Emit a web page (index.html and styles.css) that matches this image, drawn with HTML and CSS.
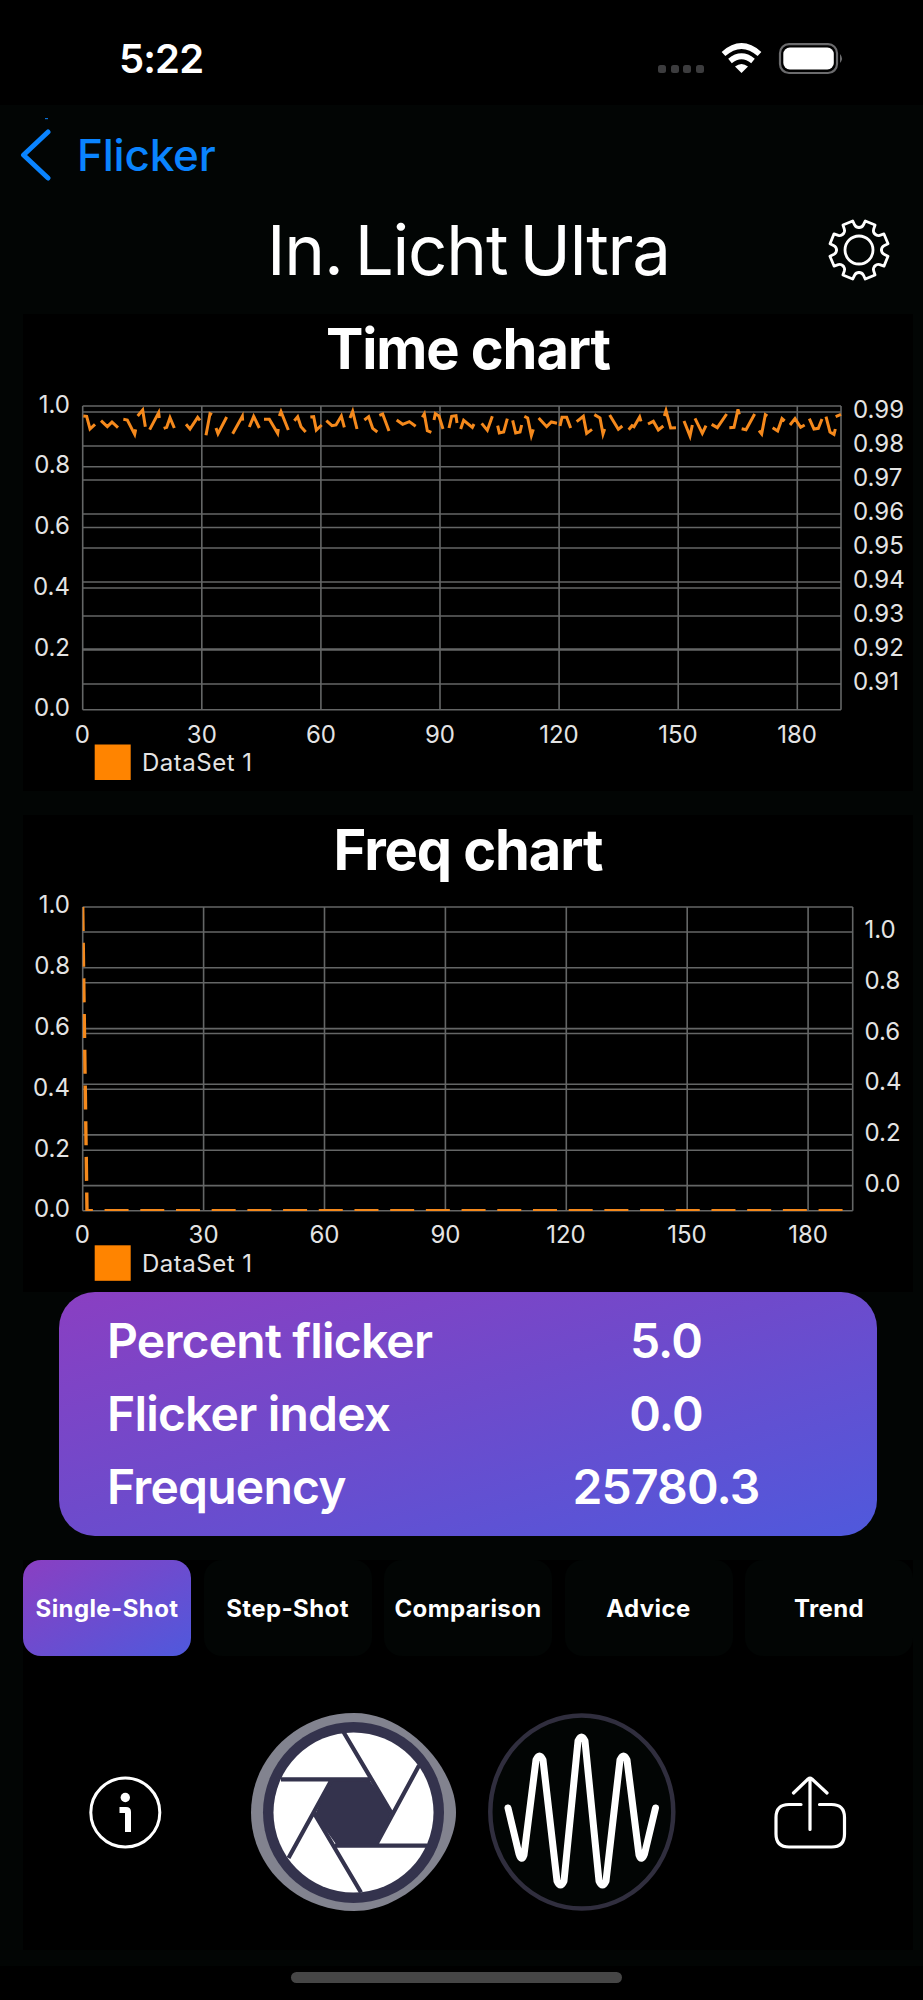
FILE: index.html
```html
<!DOCTYPE html>
<html lang="en">
<head>
    <meta charset="UTF-8">
    <title>Flicker</title>
    <link rel="stylesheet" href="styles.css">
</head>
<body>
    <div class="status-bar">
        <span class="time">5:22</span>
        <svg class="status-icons" width="188" height="34" viewBox="0 0 188 34">
            <g fill="#3c3c3e">
                <rect x="0" y="22" width="8" height="8" rx="2.500"/>
                <rect x="13" y="22" width="8" height="8" rx="2.500"/>
                <rect x="25" y="22" width="8" height="8" rx="2.500"/>
                <rect x="38" y="22" width="8" height="8" rx="2.500"/>
            </g>
            <g fill="none" stroke="#fff" stroke-width="5.600">
                <path d="M65.500 11 Q83.500 -5 101.500 11"/>
                <path d="M72 18 Q83.500 8.500 95 18"/>
            </g>
            <path d="M77 23.500 Q83.500 18.500 90 23.500 L83.500 30 Z" fill="#fff"/>
            <rect x="122" y="1.200" width="57" height="28.800" rx="9" fill="none" stroke="#6b6b6d" stroke-width="2.200"/>
            <rect x="125.300" y="4.500" width="50.500" height="22" rx="6.500" fill="#fff"/>
            <path d="M182 11 Q186 15.500 182 20 Z" fill="#6b6b6d"/>
        </svg>
    </div>

    <div class="nav">
        <svg width="32" height="80" viewBox="0 -13 32 80">
            <path d="M29 4 L4.500 27 L29 50" fill="none" stroke="#0a84ff" stroke-width="5" stroke-linecap="round" stroke-linejoin="round"/>
            <rect x="26" y="-10" width="3" height="1.200" fill="#0a6ed1"/>
        </svg>
        <span class="back">Flicker</span>
    </div>

    <div class="title-row">
        <h1>In. Licht Ultra</h1>
        <svg class="gear" width="62" height="62" viewBox="-31 -31 62 62">
            <g fill="none" stroke="#fff" stroke-width="2.800" stroke-linejoin="round" stroke-linecap="round">
                <circle r="14"/>
                <path id="tooth" d="M0 -22.500Q3 -22.500 4.300 -25L6.300 -29L16.100 -25L14.600 -20.700Q13.800 -18 15.900 -15.900"/>
                <use href="#tooth" transform="rotate(45)"/>
                <use href="#tooth" transform="rotate(90)"/>
                <use href="#tooth" transform="rotate(135)"/>
                <use href="#tooth" transform="rotate(180)"/>
                <use href="#tooth" transform="rotate(225)"/>
                <use href="#tooth" transform="rotate(270)"/>
                <use href="#tooth" transform="rotate(315)"/>
            </g>
        </svg>
    </div>

    <div class="panel">
        <h2>Time chart</h2>
        <svg class="chart" width="890" height="407" viewBox="23 384 890 407">
            <path class="grid" d="M82.700 406H841M82.700 466.700H841M82.700 527.500H841M82.700 588H841M82.700 649H841M82.700 709.700H841
                M82.700 412H841M82.700 446H841M82.700 480H841M82.700 514H841M82.700 548H841M82.700 582H841M82.700 616H841M82.700 650H841M82.700 684H841
                M82.700 406V709.700M201.800 406V709.700M320.900 406V709.700M440 406V709.700M559.100 406V709.700M678.200 406V709.700M797.300 406V709.700M841 406V709.700"/>
            <g transform="translate(20 310) scale(.33333)">
                <path class="wave" d="M190 318L200 319L210 357L225 343 M243 332L262 350L276 336L294 353 M310 328L322 330L344 373L347 358
                    M353 318L368 300L376 350 M389 359L416 308L418 324 M431 355L440 352L450 323L463 354 M498 343L510 357L533 322L540 331
                    M558 376L570 311L576 314 M588 354L594 371L620 321 M638 371L667 319L668 332 M688 351L701 319L718 354
                    M732 328L748 328L773 370L775 357 M778 318L783 305L805 360 M823 332L833 320L843 350L857 366 M871 321L881 320L889 360L905 345
                    M919 332L936 347L948 345L964 318L973 352 M990 324L998 304L1011 357 M1033 330L1046 320L1058 355L1072 366
                    M1078 316L1088 312L1107 363 M1130 330L1148 343L1168 335L1187 349 M1207 322L1213 312L1222 362L1234 367
                    M1242 330L1246 311L1257 318L1269 357 M1287 354L1295 319L1308 317L1311 339 M1322 357L1331 331L1357 352L1362 342
                    M1385 340L1402 361L1417 319 M1433 347L1438 369L1451 366L1462 326 M1478 331L1487 369L1500 366L1505 345
                    M1513 319L1523 324L1534 377L1540 358 M1556 324L1580 350L1594 336L1611 340 M1620 348L1626 322L1640 322L1652 354
                    M1670 335L1690 319L1700 370L1716 358 M1723 314L1740 324L1749 372L1754 357 M1769 315L1795 358L1807 348
                    M1826 359L1836 347L1842 350L1859 321L1863 334 M1884 342L1900 334L1915 360L1930 348 M1933 318L1938 302L1952 354L1968 353
                    M1992 333L2010 378L2017 345 M2025 325L2047 370L2058 347 M2075 343L2092 353L2120 312 M2128 353L2142 352L2154 298L2158 313
                    M2165 356L2178 359L2204 312 M2217 362L2225 372L2236 314L2242 318 M2258 353L2273 363L2286 326L2294 333
                    M2310 345L2325 326L2342 352L2354 345 M2368 326L2382 357L2395 355L2406 327 M2418 320L2430 366L2442 373L2446 357 M2447 320L2463 313"/>
            </g>
            <g class="axis left">
                <text x="70" y="412.500">1.0</text>
                <text x="70" y="473">0.8</text>
                <text x="70" y="534">0.6</text>
                <text x="70" y="594.500">0.4</text>
                <text x="70" y="655.500">0.2</text>
                <text x="70" y="716">0.0</text>
            </g>
            <g class="axis">
                <text x="853" y="418">0.99</text>
                <text x="853" y="452">0.98</text>
                <text x="853" y="486">0.97</text>
                <text x="853" y="520">0.96</text>
                <text x="853" y="554">0.95</text>
                <text x="853" y="588">0.94</text>
                <text x="853" y="622">0.93</text>
                <text x="853" y="656">0.92</text>
                <text x="853" y="690">0.91</text>
            </g>
            <g class="axis ticks">
                <text x="82.300" y="742.500">0</text>
                <text x="201.800" y="742.500">30</text>
                <text x="320.900" y="742.500">60</text>
                <text x="440" y="742.500">90</text>
                <text x="559" y="742.500">120</text>
                <text x="678" y="742.500">150</text>
                <text x="797" y="742.500">180</text>
            </g>
            <rect class="legend" x="94.700" y="744.500" width="36" height="35.500"/>
            <text class="axis name" x="142" y="771">DataSet 1</text>
        </svg>
    </div>

    <div class="panel freq">
        <h2>Freq chart</h2>
        <svg class="chart" width="890" height="407" viewBox="23 885 890 407">
            <path class="grid" d="M82.700 907H852.700M82.700 967.700H852.700M82.700 1028.600H852.700M82.700 1089.300H852.700M82.700 1150.300H852.700M82.700 1210.700H852.700
                M82.700 932H852.700M82.700 982.800H852.700M82.700 1033.500H852.700M82.700 1084.200H852.700M82.700 1134.900H852.700M82.700 1185.600H852.700
                M82.700 907V1210.700M203.600 907V1210.700M324.500 907V1210.700M445.400 907V1210.700M566.300 907V1210.700M687.200 907V1210.700M808.100 907V1210.700M852.700 907V1210.700"/>
            <clipPath id="plot"><rect x="82.700" y="906" width="770" height="305"/></clipPath>
            <path class="spectrum" clip-path="url(#plot)" d="M82.700 907L87 1210.700H852.700"/>
            <g class="axis left">
                <text x="70" y="913.300">1.0</text>
                <text x="70" y="974">0.8</text>
                <text x="70" y="1035">0.6</text>
                <text x="70" y="1095.500">0.4</text>
                <text x="70" y="1156.500">0.2</text>
                <text x="70" y="1217">0.0</text>
            </g>
            <g class="axis">
                <text x="864.500" y="938">1.0</text>
                <text x="864.500" y="989">0.8</text>
                <text x="864.500" y="1039.700">0.6</text>
                <text x="864.500" y="1090.300">0.4</text>
                <text x="864.500" y="1141">0.2</text>
                <text x="864.500" y="1191.700">0.0</text>
            </g>
            <g class="axis ticks">
                <text x="82.300" y="1243.300">0</text>
                <text x="203.600" y="1243.300">30</text>
                <text x="324.500" y="1243.300">60</text>
                <text x="445.400" y="1243.300">90</text>
                <text x="566" y="1243.300">120</text>
                <text x="687" y="1243.300">150</text>
                <text x="808" y="1243.300">180</text>
            </g>
            <rect class="legend" x="94.700" y="1245.300" width="36" height="35.500"/>
            <text class="axis name" x="142" y="1272">DataSet 1</text>
        </svg>
    </div>

    <div class="results">
        <span>Percent flicker</span><span class="value">5.0</span>
        <span>Flicker index</span><span class="value">0.0</span>
        <span>Frequency</span><span class="value">25780.3</span>
    </div>

    <div class="bottom">
        <div class="tabs">
            <div class="tab active">Single-Shot</div>
            <div class="tab">Step-Shot</div>
            <div class="tab">Comparison</div>
            <div class="tab">Advice</div>
            <div class="tab">Trend</div>
        </div>
        <svg class="actions" width="890" height="294" viewBox="23 1656 890 294">
            <!-- info -->
            <circle cx="125.300" cy="1812.500" r="34.500" fill="none" stroke="#fff" stroke-width="3"/>
            <circle cx="125.300" cy="1797.500" r="4.700" fill="#fff"/>
            <path d="M119.500 1807H126Q131 1807 131 1812V1832H125V1813H119.500Z" fill="#fff"/>

            <!-- shutter -->
            <path d="M354 1713C407 1713 456 1768 456 1812.500C456 1857 407 1911 354 1911C297 1911 251 1867 251 1812.500C251 1758 297 1713 354 1713Z" fill="#82838f"/>
            <circle cx="353.500" cy="1812.500" r="90.500" fill="#34334d"/>
            <circle cx="353.500" cy="1812.500" r="80" fill="#fff"/>
            <path d="M330.500 1778H368L392 1812L376.500 1844.500L338 1847L315 1815Z" fill="#34334d"/>
            <path d="M343.500 1732L391.500 1813M281 1779.300H370M419 1765.500L376.500 1844M427 1845.700H335M361 1892.500L314 1813M288.500 1858L331.500 1780" fill="none" stroke="#34334d" stroke-width="4.200"/>

            <!-- waveform -->
            <ellipse cx="581.800" cy="1812" rx="91.500" ry="96.500" fill="#020504" stroke="#302e3e" stroke-width="4.500"/>
            <path d="M508 1808L519 1854Q521.500 1862 524 1855L536 1760Q539.500 1752 543 1760L557 1881Q560.500 1889 564 1881L578 1741Q581.500 1733 585 1741L599 1881Q602.500 1889 606 1881L620 1760Q623.500 1752 627 1760L639 1855Q641.500 1862 644.500 1854L655.500 1808" fill="none" stroke="#fff" stroke-width="7" stroke-linecap="round" stroke-linejoin="round"/>

            <!-- share -->
            <path d="M801 1804.500H789Q776 1804.500 776 1817.500V1834Q776 1847 789 1847H831.500Q844.500 1847 844.500 1834V1817.500Q844.500 1804.500 831.500 1804.500H819.500M810 1829.500V1779M793.500 1793L808 1779Q810 1777.500 812 1779L827 1793" fill="none" stroke="#fff" stroke-width="3.200" stroke-linecap="round"/>
        </svg>
    </div>
    <div class="home"><div class="home-bar"></div></div>
</body>
</html>
```

FILE: styles.css
```css
* {
    box-sizing: border-box;
}

body {
    margin: 0;
    width: 923px;
    height: 2000px;
    background-color: #020504;
    color: #fff;
    font-family: Inter, "Liberation Sans", sans-serif;
    overflow: hidden;
}

.status-bar {
    height: 105px;
    background-color: #000;
    display: flex;
    justify-content: space-between;
    padding: 34px 77px 0 119px;
}

.time {
    font-size: 40px;
    line-height: 49px;
    font-weight: 600;
    letter-spacing: -0.9px;
}

.status-icons {
    margin-top: 9px;
}

.nav {
    height: 99px;
    padding: 0 0 0 19px;
    display: flex;
    align-items: center;
    gap: 26px;
}

.back {
    font-size: 44px;
    font-weight: 500;
    color: #0a84ff;
    letter-spacing: -0.2px;
}

.title-row {
    height: 110px;
    display: flex;
    align-items: center;
    padding: 0 33px 18px 267px;
    justify-content: space-between;
}

h1 {
    margin: 0;
    font-size: 69px;
    font-weight: 400;
    line-height: 88px;
    letter-spacing: -1.2px;
    word-spacing: -6px;
    white-space: nowrap;
}

.panel {
    margin: 0 10px 0 23px;
    height: 477px;
    background-color: #000;
}

.panel.freq {
    margin-top: 24px;
}

h2 {
    margin: 0;
    height: 70px;
    font-size: 56px;
    line-height: 70px;
    font-weight: 700;
    text-align: center;
    letter-spacing: -1.1px;
}

.chart,
.actions {
    display: block;
}

.grid {
    fill: none;
    stroke: #646666;
    stroke-width: 1.6;
}

.wave {
    fill: none;
    stroke: #f5891c;
    stroke-width: 9;
}

.spectrum {
    fill: none;
    stroke: #f5891c;
    stroke-width: 3.4;
    stroke-dasharray: 24 11.7;
}

.legend {
    fill: #ff8400;
}

.axis {
    fill: #e4e4e4;
    font-size: 24px;
}

.name {
    letter-spacing: 0.5px;
}

.left {
    text-anchor: end;
}

.ticks {
    text-anchor: middle;
}

.results {
    width: 818px;
    height: 244px;
    margin: 0 0 24px 59px;
    padding: 12px 0 0 48px;
    border-radius: 36px;
    background: linear-gradient(to bottom right, #8a3fc2, #6f4acb 45%, #4f59dc);
    display: grid;
    grid-template-columns: 360px 398px;
    grid-auto-rows: 73.400px;
    align-items: center;
    font-size: 48px;
    line-height: 60px;
    font-weight: 600;
    letter-spacing: -0.8px;
}

.value {
    text-align: center;
}

.bottom {
    margin-left: 23px;
    width: 890px;
    height: 390px;
    background-color: #000;
}

.tabs {
    display: grid;
    grid-template-columns: repeat(5, 168px);
    column-gap: 12.500px;
    height: 96px;
}

.tab {
    display: flex;
    align-items: center;
    justify-content: center;
    border-radius: 18px;
    background-color: #020504;
    font-size: 24px;
    font-weight: 700;
    letter-spacing: 0.4px;
}

.tab.active {
    background: linear-gradient(to bottom right, #8a3fc2, #4f59dc);
}

.home {
    height: 34px;
    margin-top: 16px;
    background-color: #000;
    display: flex;
    justify-content: center;
    padding-right: 10px;
}

.home-bar {
    width: 331px;
    height: 11px;
    margin-top: 6px;
    border-radius: 6px;
    background-color: #464646;
}
```
